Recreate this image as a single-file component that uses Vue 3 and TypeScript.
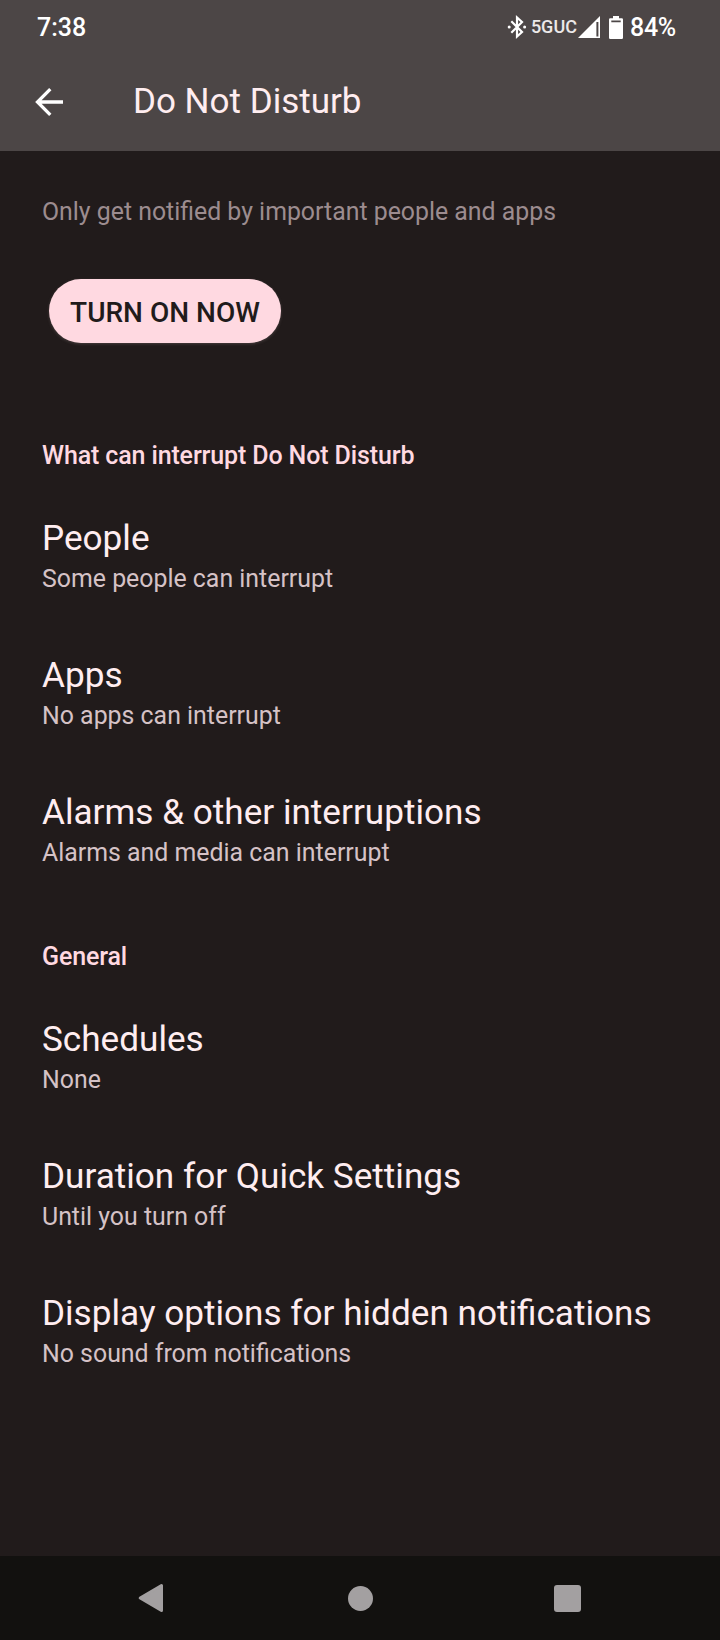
<script setup lang="ts">
interface Item {
  title: string
  summary: string
}
interface Section {
  heading: string
  items: Item[]
}

const sections: Section[] = [
  {
    heading: 'What can interrupt Do Not Disturb',
    items: [
      { title: 'People', summary: 'Some people can interrupt' },
      { title: 'Apps', summary: 'No apps can interrupt' },
      { title: 'Alarms & other interruptions', summary: 'Alarms and media can interrupt' },
    ],
  },
  {
    heading: 'General',
    items: [
      { title: 'Schedules', summary: 'None' },
      { title: 'Duration for Quick Settings', summary: 'Until you turn off' },
      { title: 'Display options for hidden notifications', summary: 'No sound from notifications' },
    ],
  },
]
</script>

<template>
  <div class="screen">
    <header class="top">
      <div class="status">
        <span class="clock">7:38</span>
        <div class="status-right">
          <svg class="bt" width="20" height="24" viewBox="0 0 20 24">
            <path d="M4.3 6.3 L15 17 L10 21.5 V2.5 L15 7 L4.3 17.7" fill="none" stroke="#fff" stroke-width="2.2" />
            <circle cx="2.2" cy="12" r="1.5" fill="#fff" />
            <circle cx="17.6" cy="12" r="1.5" fill="#fff" />
          </svg>
          <span class="network">5GUC</span>
          <svg class="signal" width="22" height="22" viewBox="0 0 22 22">
            <path fill="#fff" fill-rule="evenodd" d="M0 22 L22 0 V22 Z M18.4 6 V20.6 H20.4 V6 Z" />
          </svg>
          <svg class="battery" width="14" height="23" viewBox="0 0 14 23">
            <path fill="#fff" fill-rule="evenodd" d="M4 0 H10 V2.3 H12.8 Q14 2.3 14 3.5 V21.8 Q14 23 12.8 23 H1.2 Q0 23 0 21.8 V3.5 Q0 2.3 1.2 2.3 H4 Z M2.3 4.6 V6.2 H11.7 V4.6 Z" />
          </svg>
          <span class="percent">84%</span>
        </div>
      </div>
      <div class="appbar">
        <svg class="back" width="28" height="28" viewBox="0 0 28 28">
          <path d="M15.3 1.2 L2.5 14 L15.3 26.8 M2.5 14 H28" fill="none" stroke="#fff" stroke-width="3.3" />
        </svg>
        <h1>Do Not Disturb</h1>
      </div>
    </header>

    <main>
      <p class="intro">Only get notified by important people and apps</p>
      <button class="turn-on" type="button">TURN ON NOW</button>
      <section v-for="s in sections" :key="s.heading">
        <h2>{{ s.heading }}</h2>
        <div v-for="item in s.items" :key="item.title" class="item">
          <div class="title">{{ item.title }}</div>
          <div class="summary">{{ item.summary }}</div>
        </div>
      </section>
    </main>

    <nav>
      <svg width="26" height="30" viewBox="0 0 26 30">
        <path d="M2.2 15 L23.5 2.5 V27.5 Z" fill="#a3a0a1" stroke="#a3a0a1" stroke-width="3" stroke-linejoin="round" />
      </svg>
      <span class="home"></span>
      <span class="recents"></span>
    </nav>
  </div>
</template>

<style>
body {
  margin: 0;
  background: #211b1b;
}
</style>

<style scoped>
.screen {
  display: flex;
  flex-direction: column;
  width: 720px;
  height: 1640px;
  overflow: hidden;
  background: #211b1b;
  font-family: Roboto, sans-serif;
  color: #ffedf0;
}
.top {
  height: 151px;
  background: #4c4646;
}
.status {
  display: flex;
  align-items: center;
  justify-content: space-between;
  box-sizing: border-box;
  height: 54px;
  padding: 0 44px 0 37px;
  color: #fff;
}
.clock,
.percent {
  padding-top: 1px;
  font-size: 25px;
  font-weight: 500;
  line-height: 29px;
}
.percent {
  margin-left: 7px;
  letter-spacing: -0.25px;
}
.status-right {
  display: flex;
  align-items: center;
}
.network {
  margin-left: 4px;
  font-size: 18px;
  font-weight: 500;
  line-height: 22px;
  color: #ece9e9;
}
.signal {
  margin: 0 9px 0 1px;
}
.appbar {
  display: flex;
  align-items: center;
  height: 96px;
  padding-left: 35px;
}
h1 {
  margin: 0 0 0 70px;
  font-size: 35px;
  font-weight: 400;
  line-height: 42px;
}
main {
  flex: 1;
  padding-left: 42px;
}
.intro {
  margin: 46px 0 0;
  font-size: 24.85px;
  line-height: 29px;
  color: #9c8c8f;
}
.turn-on {
  display: block;
  width: 232px;
  height: 64px;
  margin: 53px 0 57px 7px;
  padding: 4px 0 0;
  border: 0;
  border-radius: 32px;
  background: #ffd9e1;
  box-shadow: 0 1px 3px rgba(120, 105, 105, 0.45);
  font-family: inherit;
  font-size: 28px;
  font-weight: 500;
  line-height: 32px;
  color: #211b1b;
}
h2 {
  box-sizing: border-box;
  height: 90px;
  margin: 0;
  padding-top: 41px;
  font-size: 25px;
  font-weight: 500;
  line-height: 29px;
  letter-spacing: -0.13px;
  color: #ffd9e1;
}
.item {
  box-sizing: border-box;
  height: 137px;
  padding-top: 28px;
}
.title {
  font-size: 35.15px;
  line-height: 41px;
}
.summary {
  margin-top: 5px;
  font-size: 24.88px;
  line-height: 29px;
  color: #d5c2c6;
}
nav {
  display: flex;
  align-items: center;
  justify-content: space-between;
  box-sizing: border-box;
  height: 84px;
  padding: 0 139px 0 138px;
  background: #12110f;
}
.home {
  width: 25px;
  height: 25px;
  margin-left: 3px;
  border-radius: 50%;
  background: #a3a0a1;
}
.recents {
  width: 27px;
  height: 27px;
  border-radius: 3px;
  background: #a3a0a1;
}
</style>
